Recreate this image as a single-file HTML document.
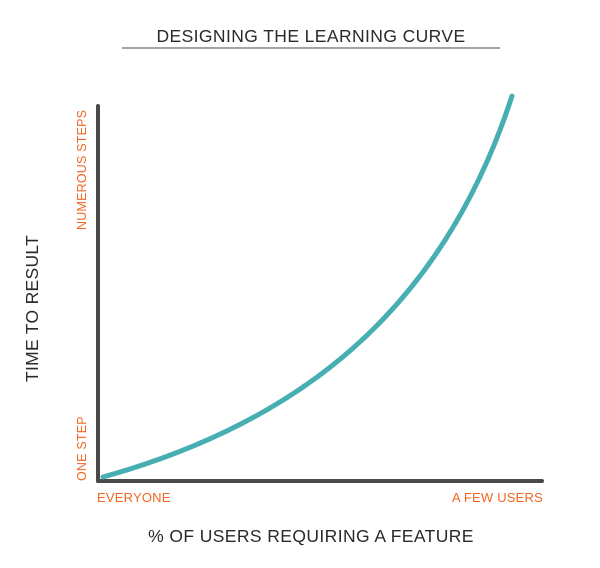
<!DOCTYPE html>
<html><head><style>
body{margin:0;background:#fff;width:600px;height:563px;overflow:hidden}
svg text{font-family:"Liberation Sans",sans-serif}
</style></head><body>
<svg width="600" height="563" viewBox="0 0 600 563">
<text x="311" y="42" text-anchor="middle" font-size="17.5" letter-spacing="0.4" fill="#2a2a2a">DESIGNING THE LEARNING CURVE</text>
<line x1="122" y1="48" x2="500" y2="48" stroke="#444" stroke-width="1"/>
<line x1="98" y1="106" x2="98" y2="481" stroke="#4a4a4c" stroke-width="4" stroke-linecap="round"/>
<line x1="98" y1="481" x2="542" y2="481" stroke="#4a4a4c" stroke-width="4" stroke-linecap="round"/>
<path d="M103,477 C290,425 440,318 512,96" fill="none" stroke="#47aeb2" stroke-width="5" stroke-linecap="round"/>
<text transform="translate(86,230) rotate(-90)" font-size="12.5" letter-spacing="0.2" fill="#f26522">NUMEROUS STEPS</text>
<text transform="translate(86,481) rotate(-90)" font-size="12.5" letter-spacing="0.2" fill="#f26522">ONE STEP</text>
<text transform="translate(38,382) rotate(-90)" font-size="17.5" letter-spacing="0.3" fill="#2a2a2a">TIME TO RESULT</text>
<text x="97" y="502" font-size="13" letter-spacing="0.2" fill="#f26522">EVERYONE</text>
<text x="543" y="502" text-anchor="end" font-size="13" letter-spacing="0.2" fill="#f26522">A FEW USERS</text>
<text x="311" y="542" text-anchor="middle" font-size="17.5" letter-spacing="0.4" fill="#2a2a2a">% OF USERS REQUIRING A FEATURE</text>
</svg>
</body></html>
